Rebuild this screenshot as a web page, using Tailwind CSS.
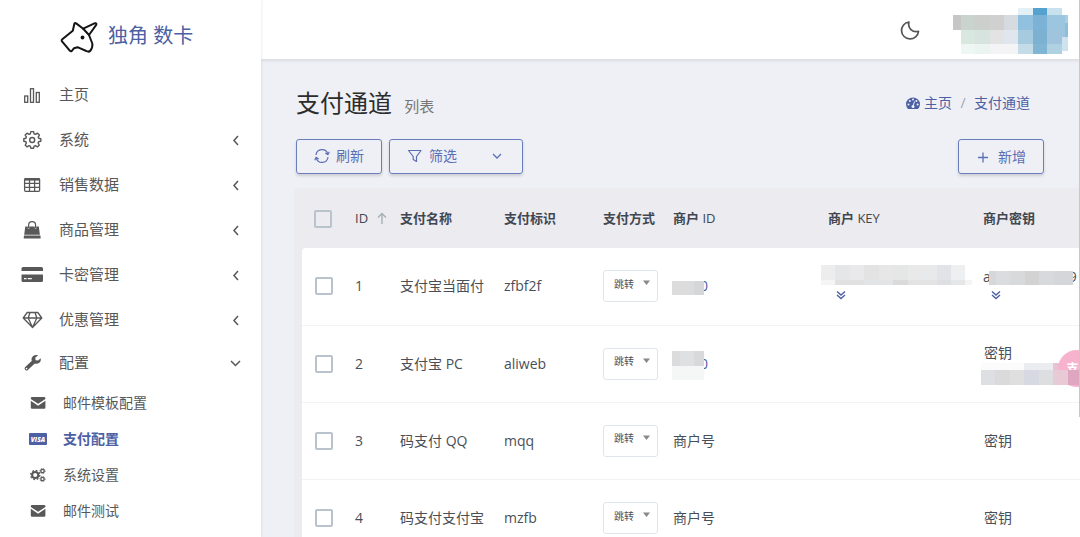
<!DOCTYPE html>
<html lang="zh-CN">
<head>
  <meta charset="utf-8">
  <meta name="viewport" content="width=device-width, initial-scale=1">
  <title>支付通道</title>
  <script src="https://cdn.jsdelivr.net/npm/@tailwindcss/browser@4"></script>
</head>
<body class="relative flex h-screen overflow-hidden bg-[#eff0f6] font-['Open_Sans','Noto_Sans_CJK_SC',sans-serif] text-sm text-[#4a4f57]">

  <!-- sidebar -->
  <aside class="z-10 flex w-[261px] shrink-0 flex-col bg-white text-[#585858] shadow-[0_0_3px_rgba(0,0,0,0.12)]">
    <a href="#" class="flex h-[72px] items-center gap-2.5 pl-[60px] text-xl text-[#4c60a3]">
      <svg class="h-9 w-[38px]" viewBox="60 18 38 36" fill="none" stroke="#151515" stroke-width="2" stroke-linejoin="round" stroke-linecap="round">
        <path d="M74.5 23.3Q75.300 22.600 76.200 23.400L83.200 28.700 89 35 92.300 43.500Q93 47.500 90.500 50.500Q88.800 52.500 86.300 51L77.500 47.200 74 48.200 71.800 51Q70.800 51.800 69.800 50.600L61.800 41.200Q61.300 40.200 62.300 39.300L72.800 30.800Z"/>
        <path d="M83.200 28.700L95 23.200Q97 23 96.200 24.800L89 35"/>
        <circle cx="82.500" cy="37.500" r="1.900" fill="#151515" stroke="none"/>
      </svg>
      独角 数卡
    </a>
    <nav class="flex flex-col text-[15px]">
      <a href="#" class="flex h-[45px] items-center gap-4 pl-[21px] pr-5">
        <svg class="h-[22px] w-[22px]" viewBox="0 0 22 22" fill="none" stroke="currentColor" stroke-width="1.300"><rect x="3.700" y="12" width="3" height="6.300"/><rect x="9.500" y="4.700" width="3" height="13.600"/><rect x="15.300" y="8.500" width="3" height="9.800"/></svg>
        <span class="flex-1">主页</span>
      </a>
      <a href="#" class="flex h-[45px] items-center gap-4 pl-[21px] pr-[19px]">
        <svg class="h-[22px] w-[22px]" viewBox="0 0 22 22" fill="none" stroke="currentColor" stroke-width="1.400" stroke-linejoin="round"><path d="M9.800 3.200h2.800l.5 2.200 1.300.6 2.100-1.200 1.900 1.900-1.200 2 .5 1.200 2.100.5v2.500l-2.200.5-.5 1.300 1.200 1.900-1.900 1.900-2-1.200-1.300.5-.5 2h-2.800L9.300 17.800l-1.200-.5-2 1.200-1.900-1.900 1.200-1.900-.5-1.300L2.800 12.900v-2.500l2.100-.5.500-1.200L4.200 6.700l1.900-1.900L8.100 6l1.200-.6z" transform="translate(0 -.6)"/><circle cx="11.200" cy="11" r="2.500"/></svg>
        <span class="flex-1">系统</span>
        <svg class="h-3 w-3" viewBox="0 0 12 12" fill="none" stroke="currentColor" stroke-width="1.500"><path d="M8 2L4 6.500 8 11"/></svg>
      </a>
      <a href="#" class="flex h-[45px] items-center gap-4 pl-[21px] pr-[19px]">
        <svg class="h-[22px] w-[22px]" viewBox="0 0 22 22" fill="none" stroke="currentColor" stroke-width="1.300"><rect x="3.600" y="4.600" width="15" height="12.700" rx="1"/><path d="M3.600 5.400h15" stroke-width="2.400"/><path d="M3.600 9.300h15M3.600 13.300h15M8.500 5v12.300M13.600 5v12.300"/></svg>
        <span class="flex-1">销售数据</span>
        <svg class="h-3 w-3" viewBox="0 0 12 12" fill="none" stroke="currentColor" stroke-width="1.500"><path d="M8 2L4 6.500 8 11"/></svg>
      </a>
      <a href="#" class="flex h-[45px] items-center gap-4 pl-[21px] pr-[19px]">
        <svg class="h-[22px] w-[22px]" viewBox="0 0 22 22" fill="currentColor"><path d="M4.300 7.500h2.500v2h1.500v-2h5.500v2h1.500v-2h2.500l1.100 8.200H3.200zM3 16.500h16.400l.3 2.500q0 .6-.7.600H3.400q-.7 0-.7-.6z"/><path d="M7.600 9V6.200a3.500 3.500 0 0 1 7 0V9" fill="none" stroke="currentColor" stroke-width="1.200"/></svg>
        <span class="flex-1">商品管理</span>
        <svg class="h-3 w-3" viewBox="0 0 12 12" fill="none" stroke="currentColor" stroke-width="1.500"><path d="M8 2L4 6.500 8 11"/></svg>
      </a>
      <a href="#" class="flex h-[45px] items-center gap-4 pl-[21px] pr-[19px]">
        <svg class="h-[22px] w-[22px]" viewBox="0 0 22 22" fill="currentColor"><path d="M2 3h18.500q1.500 0 1.500 1.500V7H.500V4.500Q.500 3 2 3z"/><path fill-rule="evenodd" d="M.500 10.500H22V16.500q0 1.500-1.500 1.500H2Q.500 18 .500 16.500zM3 14v1.200h2.500V14zM6.800 14v1.200h4V14z"/></svg>
        <span class="flex-1">卡密管理</span>
        <svg class="h-3 w-3" viewBox="0 0 12 12" fill="none" stroke="currentColor" stroke-width="1.500"><path d="M8 2L4 6.500 8 11"/></svg>
      </a>
      <a href="#" class="flex h-[45px] items-center gap-4 pl-[21px] pr-[19px]">
        <svg class="h-[22px] w-[22px]" viewBox="0 0 22 22" fill="none" stroke="currentColor" stroke-width="1.300" stroke-linejoin="round"><path d="M6.200 3.500h10.600l4 5.500-9.300 9.500L2.200 9zM2.200 9h18.600M9 3.500L7.200 9l4.300 9.500L15.800 9 14 3.500"/></svg>
        <span class="flex-1">优惠管理</span>
        <svg class="h-3 w-3" viewBox="0 0 12 12" fill="none" stroke="currentColor" stroke-width="1.500"><path d="M8 2L4 6.500 8 11"/></svg>
      </a>
      <a href="#" class="flex h-[42px] items-center gap-4 pl-[21px] pr-[19px]">
        <svg class="h-[22px] w-[22px]" viewBox="0 0 22 22"><path d="M5.500 16.500l7-6.500" stroke="currentColor" stroke-width="3.800" stroke-linecap="round"/><path d="M17.200 3.200l-3 2.600.4 2.400 2.500.3 2.600-2.300q.6 3.300-1.800 4.900-2 1.300-4.300.4l-3-3q-.7-2.500 1.300-4.300 2.300-1.900 5.300-1z" fill="currentColor"/><circle cx="5.500" cy="16.600" r=".8" fill="#fff"/></svg>
        <span class="flex-1">配置</span>
        <svg class="h-3 w-3" viewBox="0 0 12 12" fill="none" stroke="currentColor" stroke-width="1.500"><path d="M1 4l4.500 4.500L10 4"/></svg>
      </a>
    </nav>
    <nav class="flex flex-col pl-[29px] pt-px text-sm">
      <a href="#" class="flex h-9 items-center gap-4">
        <svg class="h-[18px] w-[18px]" viewBox="0 0 18 18" fill="currentColor"><path d="M1.800 5V4.300Q1.800 3 3 3h12.200q1.200 0 1.200 1.300V5L9.100 9.800z"/><path d="M1.800 6.800l7.300 4.900 7.300-4.900v6.700q0 1.300-1.200 1.300H3q-1.200 0-1.200-1.300z"/></svg>
        邮件模板配置
      </a>
      <a href="#" class="flex h-9 items-center gap-4 font-bold text-[#4c60a3]">
        <svg class="h-[18px] w-[18px]" viewBox="0 0 18 18"><rect y="3" width="18" height="12" rx="1" fill="#4c60a3"/><text x="9" y="11.500" text-anchor="middle" font-size="6.500" font-style="italic" font-weight="800" fill="#fff">VISA</text></svg>
        支付配置
      </a>
      <a href="#" class="flex h-9 items-center gap-4">
        <svg class="h-[18px] w-[18px]" viewBox="0 0 18 18" fill="none" stroke="currentColor"><circle cx="6.200" cy="9" r="3.100" stroke-width="2"/><circle cx="6.200" cy="9" r="4.600" stroke-width="1.300" stroke-dasharray="1.800 1.810"/><circle cx="13.500" cy="5" r="1.700" stroke-width="1.300"/><circle cx="13.500" cy="5" r="2.600" stroke-width=".9" stroke-dasharray="1 1.040"/><circle cx="13.500" cy="13" r="1.700" stroke-width="1.300"/><circle cx="13.500" cy="13" r="2.600" stroke-width=".9" stroke-dasharray="1 1.040"/></svg>
        系统设置
      </a>
      <a href="#" class="flex h-9 items-center gap-4">
        <svg class="h-[18px] w-[18px]" viewBox="0 0 18 18" fill="currentColor"><path d="M1.800 5V4.300Q1.800 3 3 3h12.200q1.200 0 1.200 1.300V5L9.100 9.800z"/><path d="M1.800 6.800l7.300 4.900 7.300-4.900v6.700q0 1.300-1.200 1.300H3q-1.200 0-1.200-1.300z"/></svg>
        邮件测试
      </a>
    </nav>
  </aside>

  <div class="flex min-w-0 flex-1 flex-col">
    <!-- top bar -->
    <header class="flex h-[59px] shrink-0 items-center justify-end gap-8 bg-white pr-[11px] shadow-[0_1px_4px_rgba(0,0,0,0.12)]">
      <button type="button" aria-label="深色模式" class="text-[#555]">
        <svg class="h-[22px] w-[22px]" viewBox="0 0 22 22" fill="none" stroke="currentColor" stroke-width="1.700" stroke-linejoin="round"><path d="M10 3A8.500 8.500 0 1 0 19.500 12.300A7.500 7.500 0 0 1 10 3z"/></svg>
      </button>
      <svg class="mt-1 h-[48px] w-[116px]" viewBox="953 8 116 48" shape-rendering="crispEdges">
        <rect x="953" y="15" width="8" height="15" fill="#c6c6c6"/><rect x="961" y="15" width="14" height="15" fill="#cbd3cd"/><rect x="975" y="15" width="15" height="15" fill="#cbd0cc"/><rect x="990" y="15" width="14" height="15" fill="#d0d0d0"/><rect x="1004" y="15" width="14" height="15" fill="#d6dbe0"/>
        <rect x="961" y="30" width="14" height="14" fill="#d8e7e0"/><rect x="975" y="30" width="15" height="14" fill="#d6e3df"/><rect x="990" y="30" width="14" height="14" fill="#e3e3e4"/><rect x="1004" y="30" width="14" height="14" fill="#dfe6ee"/>
        <rect x="961" y="44" width="14" height="10" fill="#eef7f4"/><rect x="975" y="44" width="15" height="10" fill="#ebf4f1"/><rect x="990" y="44" width="28" height="10" fill="#f4f4f7"/>
        <rect x="1018" y="8" width="15" height="7" fill="#e3f0f6"/><rect x="1033" y="8" width="14" height="7" fill="#55a2d0"/><rect x="1047" y="8" width="15" height="7" fill="#c9e0ee"/>
        <rect x="1018" y="15" width="15" height="15" fill="#92c0df"/><rect x="1033" y="15" width="14" height="15" fill="#7cb2d5"/><rect x="1047" y="15" width="20" height="15" fill="#9cc5df"/>
        <rect x="1018" y="30" width="15" height="14" fill="#a6cbdf"/><rect x="1033" y="30" width="14" height="14" fill="#7db1d2"/><rect x="1047" y="30" width="18" height="14" fill="#a0c3de"/>
        <rect x="1018" y="44" width="15" height="10" fill="#c4dce8"/><rect x="1033" y="44" width="14" height="10" fill="#80b5d3"/><rect x="1047" y="44" width="15" height="10" fill="#afd1e2"/>
        <rect x="1065" y="15" width="3" height="8" fill="#a9cee4"/><rect x="1065" y="23" width="3" height="14" fill="#8dbfdd"/><rect x="1062" y="37" width="6" height="14" fill="#cfe2ee"/>
      </svg>
    </header>

    <main class="flex flex-1 flex-col pl-[33px]">
      <!-- title -->
      <div class="flex h-20 items-center justify-between pl-[2px] pr-[50px] pt-2">
        <h1 class="text-2xl text-[#2c2c2c]">支付通道 <small class="ml-1.5 text-[15px] text-[#777]">列表</small></h1>
        <nav class="flex items-center text-[#4c60a3]">
          <a href="#" class="flex items-center gap-1">
            <svg class="h-[14px] w-[14px]" viewBox="0 0 14 14"><path d="M2 13Q0 10.500 0 8a7 6.500 0 0 1 14 0q0 2.500-2 5z" fill="currentColor"/><g fill="#eff0f6"><circle cx="2.500" cy="8.500" r="1"/><circle cx="3.900" cy="5" r="1"/><circle cx="7" cy="3.600" r="1"/><circle cx="10.400" cy="5" r="1"/><circle cx="11.600" cy="8.500" r="1"/><circle cx="7" cy="10.500" r="1.500"/></g><path d="M7 10.500L8.500 5.500" stroke="#eff0f6" stroke-width="1"/></svg>
            主页
          </a>
          <span class="w-[22px] text-center text-[#a0a4b0]">/</span>
          <a href="#">支付通道</a>
        </nav>
      </div>

      <!-- toolbar -->
      <div class="flex gap-[7px] pl-[2px] pr-9 text-[#5c6fb3]">
        <button type="button" class="flex h-[35px] items-center gap-1.5 rounded-[3px] border border-[#6b7dbd] px-[17px] pb-0.5 shadow-[0_2px_3px_rgba(0,0,0,0.14)]">
          <svg class="h-4 w-4" viewBox="0 0 16 16" fill="none" stroke="currentColor" stroke-width="1.200"><path d="M2 7A6 6 0 0 1 13.800 6.200M14 9A6 6 0 0 1 2.200 9.800M15.300 3.800L13.900 6.600 11.300 5M.700 12.200l1.400-2.800L4.700 11"/></svg>
          刷新
        </button>
        <button type="button" class="flex h-[35px] w-[134px] items-center gap-1.5 rounded-[3px] border border-[#6b7dbd] px-[17px] pb-0.5 shadow-[0_2px_3px_rgba(0,0,0,0.14)]">
          <svg class="h-4 w-4" viewBox="0 0 16 16" fill="none" stroke="currentColor" stroke-width="1.200" stroke-linejoin="round"><path d="M1.500 2.500H14L9.500 8.500V13.500L6.200 11.500V8.500z"/></svg>
          <span class="flex-1 text-left">筛选</span>
          <svg class="h-4 w-4" viewBox="0 0 16 16" fill="none" stroke="currentColor" stroke-width="1.300"><path d="M4 6l4 4 4-4"/></svg>
        </button>
        <button type="button" class="ml-auto flex h-[35px] items-center gap-2 rounded-[3px] border border-[#6b7dbd] px-[17px] shadow-[0_2px_3px_rgba(0,0,0,0.14)]">
          <svg class="h-[14px] w-[14px]" viewBox="0 0 14 14" stroke="currentColor" stroke-width="1.300"><path d="M2 7.500h10M7 2.500v10"/></svg>
          新增
        </button>
      </div>

      <!-- channel table -->
      <div class="mt-[14px] flex-1 overflow-hidden rounded-tl bg-[#ecebf0] pl-2">
        <table class="w-[920px] table-fixed text-left">
          <colgroup>
            <col class="w-[41px]"><col class="w-[45px]"><col class="w-[104px]"><col class="w-[99px]"><col class="w-[70px]"><col class="w-[155px]"><col class="w-[155px]"><col>
          </colgroup>
          <thead class="text-[13px] text-[#414750]">
            <tr class="h-[60px] whitespace-nowrap">
              <th class="pl-3 pt-0.5"><input type="checkbox" aria-label="全选" class="block h-[18px] w-[18px] appearance-none rounded-[2px] border-2 border-[#b9c3cd]"></th>
              <th class="pl-3 font-normal"><span class="flex items-center gap-2">ID <svg class="h-3 w-3 shrink-0" viewBox="0 0 12 12" fill="none" stroke="#a5afb8" stroke-width="1.400"><path d="M6 12V1.500M2 5.500l4-4 4 4"/></svg></span></th>
              <th class="pl-3">支付名称</th>
              <th class="pl-3">支付标识</th>
              <th class="pl-3">支付方式</th>
              <th class="pl-3">商户 <span class="font-normal">ID</span></th>
              <th class="pl-3">商户 <span class="font-normal">KEY</span></th>
              <th class="pl-3">商户密钥</th>
            </tr>
          </thead>
          <tbody class="bg-white">
            <tr class="h-[77px] border-b border-[#f2f3f6]">
              <td class="rounded-tl pl-[13px]"><input type="checkbox" aria-label="选择 1" class="block h-[18px] w-[18px] appearance-none rounded-[2px] border-2 border-[#b9c3cd]"></td>
              <td class="pl-3">1</td>
              <td class="pl-3">支付宝当面付</td>
              <td class="pl-3">zfbf2f</td>
              <td class="pl-3">
                <div class="relative w-[55px]">
                  <select aria-label="支付方式" class="block h-8 w-full appearance-none rounded-[3px] border border-[#dfe5ea] pb-1 pl-2.5 text-[10px]"><option>跳转</option></select>
                  <svg class="pointer-events-none absolute right-2 top-2.5 h-1.5 w-[7px]" viewBox="0 0 7 6"><path d="M0 .5h7L3.500 5z" fill="#888"/></svg>
                </div>
              </td>
              <td class="pl-[11px]">
                <a href="#" class="flex items-center text-[#4c60a3]">
                  <svg class="relative z-10 -mr-1 mt-1 h-[14px] w-8 shrink-0" viewBox="0 0 32 14" shape-rendering="crispEdges"><rect width="22" height="14" fill="#dcdcdd"/><rect x="22" width="10" height="14" fill="#d5d6d8"/></svg>
                  <span>0</span>
                </a>
              </td>
              <td class="pb-1.5 pl-[5px]">
                <svg class="h-5 w-[151px]" viewBox="0 0 151 20" shape-rendering="crispEdges">
                  <rect width="14" height="15" fill="#ededed"/><rect x="14" width="15" height="15" fill="#e5e6e8"/><rect x="29" width="14" height="15" fill="#e9e9eb"/><rect x="43" width="15" height="15" fill="#e3e3e3"/><rect x="58" width="14" height="15" fill="#e7e7e8"/><rect x="72" width="15" height="15" fill="#e5e6e6"/><rect x="87" width="14" height="15" fill="#e9e9e9"/><rect x="101" width="15" height="15" fill="#e8e9ea"/><rect x="116" width="14" height="15" fill="#e2e3e8"/><rect x="130" width="14" height="15" fill="#edeff1"/>
                  <rect y="15" width="14" height="5" fill="#f5f5f5"/><rect x="14" y="15" width="29" height="5" fill="#e1e1e2"/><rect x="43" y="15" width="29" height="5" fill="#e3e4e5"/><rect x="72" y="15" width="15" height="5" fill="#dadada"/><rect x="87" y="15" width="29" height="5" fill="#e3e3e4"/><rect x="116" y="15" width="14" height="5" fill="#dedfe2"/><rect x="130" y="15" width="14" height="5" fill="#e5e6e8"/><rect x="144" y="15" width="7" height="5" fill="#f4f4f4"/>
                </svg>
                <a href="#" aria-label="展开" class="mt-1 ml-[14px] flex text-[#4c60a3]"><svg class="h-3 w-3" viewBox="0 0 12 12" fill="none" stroke="currentColor" stroke-width="1.400"><path d="M2 2.500l4 3.500 4-3.500M2 6l4 3.500L10 6"/></svg></a>
              </td>
              <td class="pb-1.5 pl-3">
                <span class="flex h-6 items-center"><span>a</span>
                  <svg class="relative z-10 -mr-1 -ml-0.5 h-4 w-[84px] shrink-0" viewBox="0 0 84 16" shape-rendering="crispEdges"><rect y="2" width="7" height="14" fill="#d4d8db"/><rect x="7" y="2" width="14" height="14" fill="#dbdcde"/><rect x="21" y="2" width="15" height="14" fill="#d8d9da"/><rect x="36" y="2" width="14" height="14" fill="#d2d2d2"/><rect x="50" y="2" width="15" height="14" fill="#d8d9db"/><rect x="65" y="2" width="19" height="14" fill="#d5d6d9"/></svg><span>9</span>
                </span>
                <a href="#" aria-label="展开" class="ml-[7px] flex text-[#4c60a3]"><svg class="h-3 w-3" viewBox="0 0 12 12" fill="none" stroke="currentColor" stroke-width="1.400"><path d="M2 2.500l4 3.500 4-3.500M2 6l4 3.500L10 6"/></svg></a>
              </td>
            </tr>
            <tr class="h-[77px] border-b border-[#f2f3f6]">
              <td class="pl-[13px]"><input type="checkbox" aria-label="选择 2" class="block h-[18px] w-[18px] appearance-none rounded-[2px] border-2 border-[#b9c3cd]"></td>
              <td class="pl-3">2</td>
              <td class="pl-3">支付宝 PC</td>
              <td class="pl-3">aliweb</td>
              <td class="pl-3">
                <div class="relative w-[55px]">
                  <select aria-label="支付方式" class="block h-8 w-full appearance-none rounded-[3px] border border-[#dfe5ea] pb-1 pl-2.5 text-[10px]"><option>跳转</option></select>
                  <svg class="pointer-events-none absolute right-2 top-2.5 h-1.5 w-[7px]" viewBox="0 0 7 6"><path d="M0 .5h7L3.500 5z" fill="#888"/></svg>
                </div>
              </td>
              <td class="pl-[11px]">
                <a href="#" class="flex items-center text-[#4c60a3]">
                  <svg class="relative z-10 -mr-1 mt-1 h-[29px] w-8 shrink-0" viewBox="0 0 32 29" shape-rendering="crispEdges"><rect width="8" height="15" fill="#dcdcdd"/><rect x="8" width="14" height="15" fill="#dfe0e1"/><rect x="22" width="10" height="15" fill="#d8d9db"/><rect y="15" width="32" height="14" fill="#f5f7f7"/></svg>
                  <span>0</span>
                </a>
              </td>
              <td></td>
              <td class="pl-[10px]">
                <span class="block pl-[3px]">密钥</span>
                <svg class="h-[22px] w-[99px]" viewBox="0 0 99 22" shape-rendering="crispEdges"><rect width="43" height="7" fill="#fcfbfb"/><rect x="43" width="29" height="7" fill="#ebecef"/><rect x="72" width="27" height="7" fill="#e6c2d2"/><rect y="7" width="14" height="15" fill="#dedfe2"/><rect x="14" y="7" width="15" height="15" fill="#dadadb"/><rect x="29" y="7" width="14" height="15" fill="#dfdfe0"/><rect x="43" y="7" width="15" height="15" fill="#d6d9e1"/><rect x="58" y="7" width="14" height="15" fill="#dcdee0"/><rect x="72" y="7" width="27" height="15" fill="#e8cad7"/></svg>
              </td>
            </tr>
            <tr class="h-[77px] border-b border-[#f2f3f6]">
              <td class="pl-[13px]"><input type="checkbox" aria-label="选择 3" class="block h-[18px] w-[18px] appearance-none rounded-[2px] border-2 border-[#b9c3cd]"></td>
              <td class="pl-3">3</td>
              <td class="pl-3">码支付 QQ</td>
              <td class="pl-3">mqq</td>
              <td class="pl-3">
                <div class="relative w-[55px]">
                  <select aria-label="支付方式" class="block h-8 w-full appearance-none rounded-[3px] border border-[#dfe5ea] pb-1 pl-2.5 text-[10px]"><option>跳转</option></select>
                  <svg class="pointer-events-none absolute right-2 top-2.5 h-1.5 w-[7px]" viewBox="0 0 7 6"><path d="M0 .5h7L3.500 5z" fill="#888"/></svg>
                </div>
              </td>
              <td class="pl-3">商户号</td>
              <td></td>
              <td class="pl-[13px]">密钥</td>
            </tr>
            <tr class="h-[77px]">
              <td class="pl-[13px]"><input type="checkbox" aria-label="选择 4" class="block h-[18px] w-[18px] appearance-none rounded-[2px] border-2 border-[#b9c3cd]"></td>
              <td class="pl-3">4</td>
              <td class="pl-3">码支付支付宝</td>
              <td class="pl-3">mzfb</td>
              <td class="pl-3">
                <div class="relative w-[55px]">
                  <select aria-label="支付方式" class="block h-8 w-full appearance-none rounded-[3px] border border-[#dfe5ea] pb-1 pl-2.5 text-[10px]"><option>跳转</option></select>
                  <svg class="pointer-events-none absolute right-2 top-2.5 h-1.5 w-[7px]" viewBox="0 0 7 6"><path d="M0 .5h7L3.500 5z" fill="#888"/></svg>
                </div>
              </td>
              <td class="pl-3">商户号</td>
              <td></td>
              <td class="pl-[13px]">密钥</td>
            </tr>
          </tbody>
        </table>
      </div>
    </main>
  </div>

  <!-- floating button, half off the edge -->
  <button type="button" class="absolute -right-[15px] top-[350px] h-[37px] w-[37px] overflow-hidden rounded-full bg-[#f7b3ce] text-xs font-bold text-white">
    <span class="block whitespace-nowrap pl-1">支付</span>
    <svg class="absolute left-0 top-[20px] h-[15px] w-[37px]" viewBox="0 0 37 15" shape-rendering="crispEdges"><rect width="10" height="15" fill="#e8cad7"/><rect x="10" width="11" height="15" fill="#dfa6c1"/></svg>
  </button>
  <!-- scroll thumb -->
  <div class="absolute right-0 top-0 z-20 h-[417px] w-px bg-[#c8c8c8]"></div>
</body>
</html>
